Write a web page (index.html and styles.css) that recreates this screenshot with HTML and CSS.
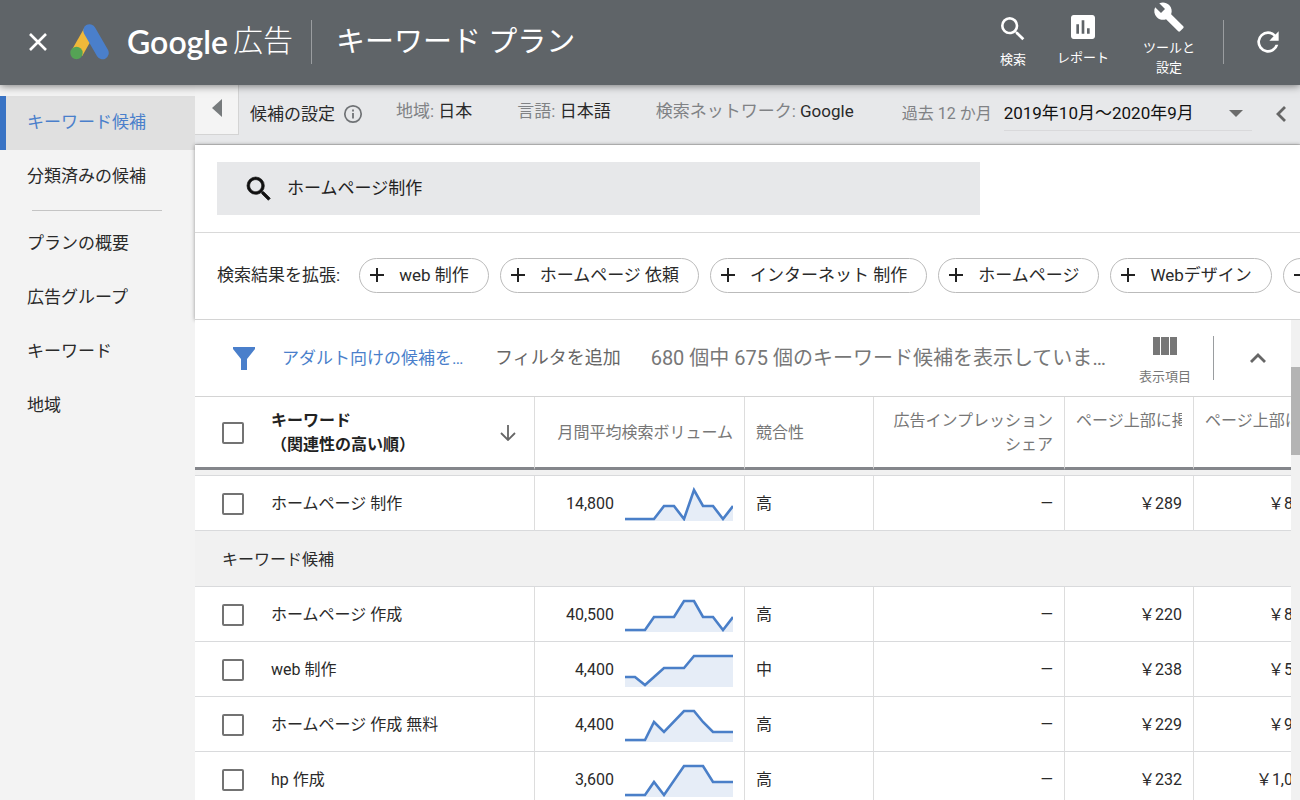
FILE: index.html
```
<!DOCTYPE html>
<html lang="ja">
<head>
  <meta charset="UTF-8">
  <meta name="viewport" content="width=device-width, initial-scale=1.0">
  <title>キーワード プラン - Google 広告</title>
  <link rel="stylesheet" href="styles.css">
</head>
<body>
  <header class="topbar">
    <button class="icon-btn close" aria-label="閉じる">
      <svg width="20" height="20" viewBox="0 0 20 20"><path d="M2 2l16 16M18 2L2 18" stroke="#fff" stroke-width="2.6" fill="none"/></svg>
    </button>
    <a class="brand" href="#">
      <svg width="40" height="36" viewBox="0 0 40 36">
        <path d="M19.500 7L7 29" stroke="#efb83a" stroke-width="12" fill="none"/>
        <path d="M19.500 6.500L32.500 29" stroke="#4a7fcb" stroke-width="12.500" stroke-linecap="round" fill="none"/>
        <circle cx="6.500" cy="29" r="6.200" fill="#55a355"/>
      </svg>
      <span class="brand-google">Google</span>
      <span class="brand-ads">広告</span>
    </a>
    <span class="divider"></span>
    <h1>キーワード プラン</h1>
    <button class="tool">
      <svg width="32" height="32" viewBox="0 0 24 24"><path fill="currentColor" d="M15.500 14h-.79l-.28-.27A6.470 6.470 0 0 0 16 9.500 6.500 6.500 0 1 0 9.500 16c1.610 0 3.090-.59 4.230-1.570l.27.28v.79l5 4.990L20.490 19l-4.990-5zm-6 0C7.010 14 5 11.990 5 9.500S7.010 5 9.500 5 14 7.010 14 9.500 11.990 14 9.500 14z"/></svg>
      <span>検索</span>
    </button>
    <nav class="tools">
      <button class="tool">
        <svg width="32" height="32" viewBox="0 0 24 24"><path fill="currentColor" d="M19 3H5c-1.100 0-2 .9-2 2v14c0 1.100.9 2 2 2h14c1.100 0 2-.9 2-2V5c0-1.100-.9-2-2-2zM9 17H7v-7h2v7zm4 0h-2V7h2v10zm4 0h-2v-4h2v4z"/></svg>
        <span>レポート</span>
      </button>
      <button class="tool">
        <svg width="32" height="32" viewBox="0 0 24 24"><path fill="currentColor" d="M22.700 19l-9.100-9.100c.9-2.300.4-5-1.500-6.900-2-2-5-2.400-7.400-1.300L9 6 6 9 1.600 4.700C.4 7.100.9 10.100 2.900 12.100c1.900 1.900 4.600 2.400 6.900 1.500l9.100 9.100c.4.4 1 .4 1.400 0l2.300-2.300c.5-.4.5-1.100.1-1.400z"/></svg>
        <span>ツールと<br>設定</span>
      </button>
    </nav>
    <span class="divider"></span>
    <button class="icon-btn" aria-label="更新">
      <svg width="32" height="32" viewBox="0 0 24 24"><path fill="currentColor" d="M17.650 6.350A7.960 7.960 0 0 0 12 4a8 8 0 1 0 7.730 10h-2.080A6 6 0 1 1 12 6c1.660 0 3.140.69 4.220 1.780L13 11h7V4l-2.350 2.350z"/></svg>
    </button>
  </header>

  <div class="layout">
    <nav class="sidebar">
      <a class="selected" href="#">キーワード候補</a>
      <a href="#">分類済みの候補</a>
      <hr>
      <a href="#">プランの概要</a>
      <a href="#">広告グループ</a>
      <a href="#">キーワード</a>
      <a href="#">地域</a>
    </nav>

    <main class="main">
      <div class="settings">
        <button class="collapse" aria-label="メニューを閉じる">
          <svg width="10" height="18" viewBox="0 0 10 18"><path d="M10 0v18L0 9z" fill="#777b7d"/></svg>
        </button>
        <div class="settings-title">
          <span>候補の設定</span>
          <svg width="20" height="20" viewBox="0 0 20 20" fill="none" stroke="#6f7275"><circle cx="10" cy="10" r="8.200" stroke-width="1.700"/><path d="M10 9v5.500M10 5.500v2" stroke-width="1.800"/></svg>
        </div>
        <a class="setting" href="#"><span>地域:</span> 日本</a>
        <a class="setting" href="#"><span>言語:</span> 日本語</a>
        <a class="setting" href="#"><span>検索ネットワーク:</span> Google</a>
        <div class="period">
          <label for="period">過去 12 か月</label>
          <div class="period-select">
            <select id="period">
              <option>2019年10月〜2020年9月</option>
            </select>
          </div>
        </div>
        <button class="icon-btn prev" aria-label="前の期間">
          <svg width="12" height="18" viewBox="0 0 12 18"><path d="M10 2L3 9l7 7" stroke="#666" stroke-width="2.800" fill="none"/></svg>
        </button>
      </div>

      <section class="panel">
        <div class="search-row">
          <label class="search-box">
            <svg width="32" height="32" viewBox="0 0 24 24"><path fill="#111" stroke="#111" stroke-width=".5" d="M15.500 14h-.79l-.28-.27A6.470 6.470 0 0 0 16 9.500 6.500 6.500 0 1 0 9.500 16c1.610 0 3.090-.59 4.230-1.570l.27.28v.79l5 4.990L20.490 19l-4.990-5zm-6 0C7.010 14 5 11.990 5 9.500S7.010 5 9.500 5 14 7.010 14 9.500 11.990 14 9.500 14z"/></svg>
            <input type="text" value="ホームページ制作" aria-label="キーワード">
          </label>
        </div>
        <div class="expand-row">
          <span class="expand-label">検索結果を拡張:</span>
          <button class="chip">web 制作</button>
          <button class="chip">ホームページ 依頼</button>
          <button class="chip">インターネット 制作</button>
          <button class="chip">ホームページ</button>
          <button class="chip">Webデザイン</button>
          <button class="chip" aria-label="候補を追加"></button>
        </div>
      </section>

      <div class="scroller">
        <section class="results">
          <div class="filter-bar">
            <svg class="funnel" width="22" height="23" viewBox="0 0 22 23"><path d="M0 0h22v2l-8 10v11H8V12L0 2z" fill="#4a7fcb"/></svg>
            <a class="filter-link" href="#">アダルト向けの候補を除外</a>
            <button class="add-filter">フィルタを追加</button>
            <p class="count">680 個中 675 個のキーワード候補を表示しています。</p>
            <button class="columns">
              <svg width="24" height="18" viewBox="0 0 24 18" fill="#777"><path d="M0 0h7v18H0zM8 0h8v18H8zM17 0h7v18h-7z"/></svg>
              <span>表示項目</span>
            </button>
            <span class="divider gray"></span>
            <button class="icon-btn" aria-label="折りたたむ">
              <svg width="18" height="12" viewBox="0 0 18 12"><path d="M2 10l7-7 7 7" stroke="#666" stroke-width="2.800" fill="none"/></svg>
            </button>
          </div>

          <table>
            <colgroup>
              <col>
              <col class="col-volume">
              <col class="col-narrow">
              <col class="col-share">
              <col class="col-narrow">
              <col class="col-narrow">
            </colgroup>
            <thead>
              <tr>
                <th class="sorted">
                  <div class="keyword">
                    <input type="checkbox" aria-label="すべて選択">
                    <span>キーワード<br>（関連性の高い順）</span>
                    <svg width="16" height="16" viewBox="0 0 16 16"><path d="M8 0v15M1 8l7 7 7-7" stroke="#666" stroke-width="1.800" fill="none"/></svg>
                  </div>
                </th>
                <th class="num">月間平均検索ボリューム</th>
                <th>競合性</th>
                <th class="num">広告インプレッション シェア</th>
                <th><div class="clip">ページ上部に掲載</div></th>
                <th><div class="clip">ページ上部に掲載</div></th>
              </tr>
            </thead>
            <tbody>
              <tr class="spacer"><td colspan="6"></td></tr>
              <tr>
                <td><label class="keyword"><input type="checkbox"><span>ホームページ 制作</span></label></td>
                <td><div class="volume">14,800
                  <svg width="108" height="34" viewBox="0 0 108 34"><path class="area" d="M0 32H29L39 19H49L59 32L69 3L78 19H88L98 32L108 19V34H0z"/><path class="line" d="M0 32H29L39 19H49L59 32L69 3L78 19H88L98 32L108 19"/></svg></div></td>
                <td>高</td>
                <td class="num">—</td>
                <td class="num">￥289</td>
                <td class="num">￥864</td>
              </tr>
              <tr class="group"><td colspan="6">キーワード候補</td></tr>
              <tr>
                <td><label class="keyword"><input type="checkbox"><span>ホームページ 作成</span></label></td>
                <td><div class="volume">40,500
                  <svg width="108" height="34" viewBox="0 0 108 34"><path class="area" d="M0 32H20L29 19H49L59 3H69L78 19H88L98 32L108 19V34H0z"/><path class="line" d="M0 32H20L29 19H49L59 3H69L78 19H88L98 32L108 19"/></svg></div></td>
                <td>高</td>
                <td class="num">—</td>
                <td class="num">￥220</td>
                <td class="num">￥812</td>
              </tr>
              <tr>
                <td><label class="keyword"><input type="checkbox"><span>web 制作</span></label></td>
                <td><div class="volume">4,400
                  <svg width="108" height="34" viewBox="0 0 108 34"><path class="area" d="M0 24H10L20 32L29 24L39 15H59L69 3H108V34H0z"/><path class="line" d="M0 24H10L20 32L29 24L39 15H59L69 3H108"/></svg></div></td>
                <td>中</td>
                <td class="num">—</td>
                <td class="num">￥238</td>
                <td class="num">￥580</td>
              </tr>
              <tr>
                <td><label class="keyword"><input type="checkbox"><span>ホームページ 作成 無料</span></label></td>
                <td><div class="volume">4,400
                  <svg width="108" height="34" viewBox="0 0 108 34"><path class="area" d="M0 32H20L29 14L39 24L59 3H69L78 14L88 24H108V34H0z"/><path class="line" d="M0 32H20L29 14L39 24L59 3H69L78 14L88 24H108"/></svg></div></td>
                <td>高</td>
                <td class="num">—</td>
                <td class="num">￥229</td>
                <td class="num">￥950</td>
              </tr>
              <tr>
                <td><label class="keyword"><input type="checkbox"><span>hp 作成</span></label></td>
                <td><div class="volume">3,600
                  <svg width="108" height="34" viewBox="0 0 108 34"><path class="area" d="M0 32H20L29 19L39 32L59 3H78L88 19H108V34H0z"/><path class="line" d="M0 32H20L29 19L39 32L59 3H78L88 19H108"/></svg></div></td>
                <td>高</td>
                <td class="num">—</td>
                <td class="num">￥232</td>
                <td class="num">￥1,056</td>
              </tr>
            </tbody>
          </table>
        </section>
        <div class="scrollbar"><div class="thumb"></div></div>
      </div>
    </main>
  </div>
</body>
</html>
```
FILE: styles.css
```
* {
  box-sizing: border-box;
}
body {
  margin: 0;
  height: 100vh;
  overflow: hidden;
  display: flex;
  flex-direction: column;
  font-family: Roboto, "Noto Sans CJK JP", sans-serif;
  font-size: 17px;
  line-height: 24px;
  color: #2a2a2a;
  background: #f3f3f3;
}
a {
  color: inherit;
  text-decoration: none;
}
button {
  font: inherit;
  color: inherit;
  background: none;
  border: none;
  padding: 0;
  cursor: pointer;
  white-space: nowrap;
}
svg {
  display: block;
  flex: none;
}

/* top bar */
.topbar {
  position: relative;
  z-index: 2;
  flex: none;
  display: flex;
  align-items: center;
  gap: 28px;
  height: 85px;
  padding: 0 16px 2px 28px;
  background: #5f6468;
  color: #fff;
  box-shadow: 0 1px 8px rgba(0, 0, 0, 0.5);
}
.icon-btn {
  display: flex;
  align-items: center;
  justify-content: center;
}
.brand {
  display: flex;
  align-items: center;
  margin-left: -6px;
  margin-right: -10px;
}
.brand-google {
  font-family: Lato, sans-serif;
  font-size: 32px;
  line-height: 40px;
  font-weight: 600;
  margin-left: 17px;
}
.brand-ads {
  font-size: 30px;
  line-height: 40px;
  font-weight: 300;
  margin-left: 5px;
  padding-bottom: 2px;
}
.divider {
  width: 1px;
  height: 44px;
  background: #9a9da0;
}
.topbar h1 {
  flex: 1;
  margin: 0 0 0 -4px;
  font-size: 29px;
  line-height: 40px;
  font-weight: 400;
}
.tools {
  display: flex;
  align-items: center;
  gap: 34px;
  padding-bottom: 5px;
}
.tool {
  display: flex;
  flex-direction: column;
  align-items: center;
  gap: 5px;
  font-size: 13px;
  line-height: 20px;
}

.layout {
  flex: 1;
  display: flex;
  min-height: 0;
}

/* side menu */
.sidebar {
  flex: none;
  width: 195px;
  padding-top: 11px;
}
.sidebar a {
  display: block;
  padding: 14px 21px 16px;
  border-left: 6px solid transparent;
}
.sidebar a.selected {
  color: #4a7fcb;
  background: #e0e0e0;
  border-color: #3973c4;
}
.sidebar hr {
  margin: 6px 33px 6px 32px;
  border: none;
  border-top: 1px solid #c4c4c4;
}

.main {
  flex: 1;
  min-width: 0;
  display: flex;
  flex-direction: column;
}

/* settings bar */
.settings {
  flex: none;
  display: flex;
  align-items: center;
  height: 60px;
  padding: 0 13px 2px 0;
  background: #e7e8ea;
  border-bottom: 1px solid #ccc;
  white-space: nowrap;
}
.collapse {
  align-self: flex-start;
  display: flex;
  align-items: center;
  justify-content: center;
  width: 44px;
  height: 50px;
  padding-bottom: 4px;
  background: #f4f4f4;
  border: solid #d4d4d4;
  border-width: 0 1px 1px 0;
}
.settings-title {
  display: flex;
  align-items: center;
  gap: 8px;
  margin: 0 33px 0 11px;
}
.setting {
  margin-right: 45px;
  padding-bottom: 5px;
}
.setting span {
  color: #808285;
}
.period {
  display: flex;
  align-items: center;
  flex: 1;
  gap: 12px;
  margin-left: 3px;
}
.period label {
  font-size: 16px;
  color: #808285;
}
.period-select {
  position: relative;
  flex: 1;
  max-width: 248px;
}
.period-select::after {
  content: "";
  position: absolute;
  right: 9px;
  top: 14px;
  border: 7px solid transparent;
  border-top-color: #6b6b6b;
  border-bottom: none;
  pointer-events: none;
}
.period-select select {
  appearance: none;
  width: 100%;
  height: 35px;
  padding: 0;
  border: none;
  border-bottom: 1px solid #d9d9db;
  background: none;
  font: inherit;
  color: #111;
}
.prev {
  margin-left: auto;
}

/* search and suggestions */
.panel {
  flex: none;
  background: #fff;
  border-bottom: 1px solid #d4d4d4;
  box-shadow: 0 0 4px rgba(0, 0, 0, 0.4);
}
.search-row {
  padding: 17px 22px;
  border-bottom: 1px solid #d9d9d9;
}
.search-box {
  display: flex;
  align-items: center;
  gap: 12px;
  max-width: 763px;
  height: 53px;
  padding: 0 26px;
  background: #e7e8ea;
}
.search-box input {
  flex: 1;
  height: 32px;
  padding: 0 0 4px;
  border: none;
  background: none;
  font: inherit;
  color: #222;
}
.expand-row {
  display: flex;
  align-items: center;
  gap: 11px;
  height: 86px;
  padding: 0 0 2px 22px;
  overflow: hidden;
  white-space: nowrap;
}
.expand-label {
  margin-right: 8px;
}
.chip {
  flex: none;
  display: flex;
  align-items: center;
  gap: 15px;
  height: 35px;
  padding: 0 19px 1px 10px;
  border: 1px solid #bbb;
  border-radius: 18px;
}
.chip::before {
  content: "";
  width: 14px;
  height: 14px;
  background:
    linear-gradient(#222, #222) center / 14px 2px no-repeat,
    linear-gradient(#222, #222) center / 2px 14px no-repeat;
}

/* results */
.scroller {
  position: relative;
  flex: 1;
  display: flex;
  min-height: 0;
}
.results {
  flex: 1;
  min-width: 0;
  overflow: hidden;
  background: #fff;
}
.filter-bar {
  display: flex;
  align-items: center;
  height: 77px;
  padding: 0 24px 0 38px;
  border-bottom: 1px solid #d4d4d4;
  white-space: nowrap;
}
.filter-link {
  width: 186px;
  margin: 0 27px;
  overflow: hidden;
  text-overflow: ellipsis;
  color: #4a7fcb;
}
.add-filter {
  font-size: 18px;
  color: #666;
}
.count {
  flex: 1;
  min-width: 0;
  margin: 0 24px 0 30px;
  overflow: hidden;
  text-overflow: ellipsis;
  font-size: 20px;
  line-height: 28px;
  color: #777;
}
.columns {
  display: flex;
  flex-direction: column;
  align-items: center;
  gap: 12px;
  margin-right: 22px;
  padding-top: 7px;
  font-size: 13px;
  line-height: 20px;
  color: #777;
}
.divider.gray {
  margin-right: 35px;
}
table {
  width: 100%;
  min-width: 1128px;
  table-layout: fixed;
  border-collapse: separate;
  border-spacing: 0;
  font-size: 16px;
}
.col-volume {
  width: 210px;
}
.col-narrow {
  width: 129px;
}
.col-share {
  width: 191px;
}
th, td {
  padding: 2px 11px 0;
  border-right: 1px solid #ddd;
  text-align: left;
}
th {
  height: 73px;
  border-bottom: 3px solid #84868b;
  font-weight: 400;
  color: #777;
}
th.sorted {
  font-weight: 700;
  color: #222;
}
td {
  height: 55px;
  border-bottom: 1px solid #d9dadc;
}
td:first-child, th:first-child {
  padding: 2px 18px 0 27px;
}
th.num, td.num {
  text-align: right;
}
.clip {
  height: 48px;
  overflow: hidden;
  white-space: nowrap;
}
.spacer td {
  height: 6px;
  background: #f1f1f1;
}
.group td {
  background: #f1f1f1;
  height: 56px;
}
.keyword {
  display: flex;
  align-items: center;
  gap: 27px;
}
.keyword span {
  flex: 1;
}
.keyword input {
  appearance: none;
  flex: none;
  width: 22px;
  height: 22px;
  margin: 0;
  border: 2px solid #737373;
  border-radius: 2px;
}
.volume {
  display: flex;
  align-items: center;
  justify-content: flex-end;
  gap: 11px;
}
.area {
  fill: #e6edf7;
}
.line {
  fill: none;
  stroke: #4a7fc8;
  stroke-width: 2.6px;
}
.scrollbar {
  flex: none;
  width: 9px;
  background: #f1f1f1;
}
.thumb {
  height: 88px;
  margin-top: 47px;
  background: #b4b4b4;
}
```
